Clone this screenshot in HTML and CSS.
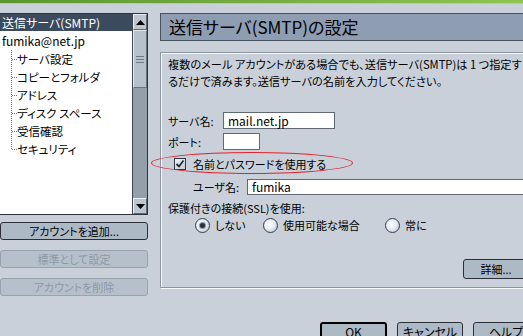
FILE: index.html
```html
<!DOCTYPE html>
<html lang="ja">
<head>
<meta charset="utf-8">
<title>送信サーバ(SMTP)の設定</title>
<link rel="stylesheet" href="styles.css">
</head>
<body>
<div class="topbar"></div>
<div class="win">
  <div class="left">
    <div class="listbox">
      <div class="tree">
        <div class="row sel">送信サーバ(SMTP)</div>
        <div class="row acct">fumika@net.jp</div>
        <div class="branch">
          <div class="row leaf">サーバ設定</div>
          <div class="row leaf">コピーとフォルダ</div>
          <div class="row leaf">アドレス</div>
          <div class="row leaf">ディスク スペース</div>
          <div class="row leaf">受信確認</div>
          <div class="row leaf">セキュリティ</div>
        </div>
      </div>
      <div class="scrollbar">
        <div class="sb-btn"><svg width="9" height="5" viewBox="0 0 9 5"><path d="M0 5 L4.5 0 L9 5 Z" fill="#000"/></svg></div>
        <div class="sb-thumb"><span class="grip"></span><span class="grip"></span><span class="grip"></span></div>
        <div class="sb-track"></div>
        <div class="sb-btn"><svg width="9" height="5" viewBox="0 0 9 5"><path d="M0 0 L9 0 L4.5 5 Z" fill="#000"/></svg></div>
      </div>
    </div>
    <div class="lbtns">
      <div class="btn">アカウントを追加...</div>
      <div class="btn disabled">標準として設定</div>
      <div class="btn disabled">アカウントを削除</div>
    </div>
  </div>
  <div class="right">
    <div class="title">送信サーバ(SMTP)の設定</div>
    <div class="panel">
      <div class="desc">複数のメール アカウントがある場合でも、送信サーバ(SMTP)は 1 つ指定す<br>るだけで済みます。送信サーバの名前を入力してください。</div>
      <div class="field f-server"><span class="lbl">サーバ名:</span><span class="input w-server">mail.net.jp</span></div>
      <div class="field f-port"><span class="lbl">ポート:</span><span class="input w-port"></span></div>
      <div class="check-row"><span class="checkbox"><svg width="10" height="10" viewBox="0 0 10 10"><path d="M1.5 5 L4 7.5 L8.5 1.5" fill="none" stroke="#1e2a36" stroke-width="1.8"/></svg></span><span>名前とパスワードを使用する</span></div>
      <div class="field f-user"><span class="lbl lbl-user">ユーザ名:</span><span class="input w-user">fumika</span></div>
      <div class="ssl">保護付きの接続(SSL)を使用:</div>
      <div class="radios">
        <div class="ritem"><span class="radio on"></span><span>しない</span></div>
        <div class="ritem"><span class="radio"></span><span>使用可能な場合</span></div>
        <div class="ritem"><span class="radio"></span><span>常に</span></div>
      </div>
      <div class="detail-row"><div class="btn detail">詳細...</div></div>
    </div>
    <div class="dlgbtns">
      <div class="btn dbtn default">OK</div>
      <div class="btn dbtn">キャンセル</div>
      <div class="btn dbtn">ヘルプ</div>
    </div>
  </div>
</div>
<div class="mark"></div>
</body>
</html>
```
FILE: styles.css
```css
* { box-sizing: border-box; }
html, body { margin: 0; padding: 0; }
body {
  position: relative;
  width: 523px;
  height: 336px;
  overflow: hidden;
  background: #c9d0d9;
  font-family: "Noto Sans CJK JP", "Noto Sans", sans-serif;
  font-size: 11px;
  font-feature-settings: "palt";
  color: #000;
}
.topbar {
  height: 4px;
  background: linear-gradient(90deg, #5b9632, #8fc451);
  border-bottom: 1px solid #b9c6b4;
}
.win { display: flex; padding-top: 9px; }

/* left column */
.left { width: 148px; flex: none; }
.listbox {
  height: 202px;
  display: flex;
  background: #fff;
  border: 1px solid #2e343c;
  border-left: none;
}
.tree { flex: 1; font-size: 11.5px; }
.row { height: 18px; line-height: 18px; white-space: nowrap; }
.sel { background: #3c4a5e; color: #fff; height: 17px; line-height: 17px; padding-left: 2px; font-size: 12px; }
.acct { margin-top: 1px; padding-left: 2px; font-size: 12px; }
.branch { position: relative; }
.branch::before {
  content: "";
  position: absolute;
  left: 11px;
  top: 0;
  bottom: 9px;
  border-left: 1px dotted #707070;
}
.leaf { position: relative; padding-left: 17px; }
.leaf::before {
  content: "";
  position: absolute;
  left: 12px;
  top: 9px;
  width: 5px;
  border-top: 1px dotted #707070;
}
.scrollbar {
  width: 15px;
  flex: none;
  display: flex;
  flex-direction: column;
  background: #959fa9;
  border-left: 1px solid #3e4650;
}
.sb-btn {
  height: 16px;
  flex: none;
  background: #bcc6d0;
  border: 1px solid #5d6670;
  border-top-color: #e8edf2;
  border-left-color: #e8edf2;
  display: flex;
  align-items: center;
  justify-content: center;
}
.sb-thumb {
  height: 58px;
  flex: none;
  background: #b7c1cb;
  border: 1px solid #6b747e;
  border-top-color: #e4e9ee;
  border-left-color: #e4e9ee;
  display: flex;
  flex-direction: column;
  align-items: center;
  justify-content: center;
  gap: 2px;
}
.grip { display: block; width: 8px; height: 1px; background: #6e7883; }
.sb-track { flex: 1; }

.lbtns { display: flex; flex-direction: column; gap: 10px; margin-top: 7px; }
.btn {
  height: 18px;
  line-height: 16px;
  text-align: center;
  white-space: nowrap;
  background: #aeb9c6;
  border: 1px solid #2b3038;
  border-radius: 3px;
}
.btn.disabled { color: #8c98a6; border-color: #97a3b0; background: #b6c0cb; }

/* right column */
.right { margin-left: 12px; width: 375px; flex: none; }
.title {
  height: 28px;
  border: 1px solid #48525f;
  background: #8e9db1;
  font-size: 17px;
  line-height: 26px;
  padding-left: 8px;
  white-space: nowrap;
}
.panel {
  margin-top: 11px;
  height: 236px;
  border: 1px solid #8c96a1;
  box-shadow: inset 1px 1px 0 #f4f6f8, 1px 1px 0 #f4f6f8;
  padding: 3px 5px 0 7px;
}
.desc { line-height: 17px; white-space: nowrap; font-size: 11.2px; }
.field { display: flex; align-items: center; }
.lbl { width: 55px; flex: none; }
.input {
  height: 17px;
  line-height: 15px;
  border: 1px solid #5f6a76;
  background: #fff;
  padding-left: 4px;
  white-space: nowrap;
  font-size: 12px;
}
.f-server { margin-top: 22px; }
.w-server { width: 112px; }
.f-port { margin-top: 4px; }
.w-port { width: 37px; }
.check-row {
  display: flex;
  align-items: center;
  height: 18px;
  margin-top: 5px;
  padding-left: 6px;
  gap: 7px;
}
.checkbox {
  width: 12px;
  height: 12px;
  border: 1px solid #2f3944;
  background: linear-gradient(135deg, #eef2f5, #c3ccd5);
  display: flex;
  align-items: center;
  justify-content: center;
}
.f-user { margin-top: 6px; padding-left: 25px; }
.lbl-user { width: 54px; }
.w-user { flex: 1; height: 16px; line-height: 14px; margin-right: -6px; border-right: none; }
.ssl { margin-top: 5px; line-height: 17px; }
.radios {
  display: grid;
  grid-template-columns: 68px 122px auto;
  padding-left: 27px;
  height: 16px;
  align-items: center;
}
.ritem { display: flex; align-items: center; gap: 5px; }
.radio {
  width: 15px;
  height: 15px;
  border-radius: 50%;
  border: 1px solid #34404c;
  background: radial-gradient(circle at 40% 40%, #ffffff 0%, #e6ecf1 45%, #aebccb 100%);
  display: flex;
  align-items: center;
  justify-content: center;
}
.radio.on::after {
  content: "";
  width: 5px;
  height: 5px;
  border-radius: 50%;
  background: #27313b;
  box-shadow: 0 0 0 1px #8d99a6;
}
.detail-row { display: flex; justify-content: flex-end; margin-top: 26px; }
.detail { width: 66px; height: 20px; line-height: 18px; }

.dlgbtns { display: flex; gap: 10px; margin-top: 34px; padding-left: 160px; }
.dbtn { width: 66px; height: 20px; line-height: 18px; flex: none; font-size: 12px; }
.dbtn.default { width: 67px; border: 2px solid #000; line-height: 16px; }

/* annotation ellipse */
.mark {
  position: absolute;
  left: 151px;
  top: 152px;
  width: 202px;
  height: 22px;
  border: 1.5px solid #e3222b;
  border-radius: 50%;
}
```
